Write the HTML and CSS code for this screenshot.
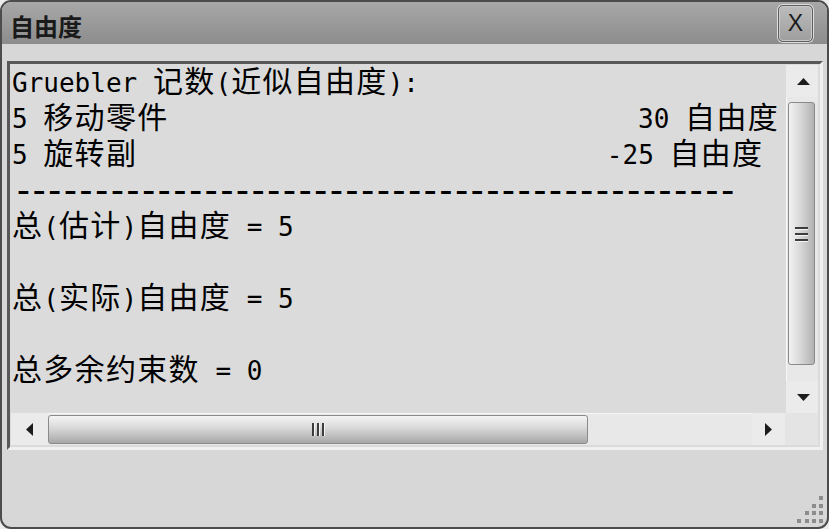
FILE: index.html
```html
<!DOCTYPE html>
<html lang="zh-CN">
<head>
<meta charset="utf-8">
<title>自由度</title>
<link rel="stylesheet" href="styles.css">
</head>
<body>
<div class="window">
  <div class="titlebar">
    <span class="title">自由度</span>
    <button class="close">X</button>
  </div>
  <div class="content">
    <div class="frame">
      <div class="view">
        <div class="text">
<div class="ln">Gruebler <span class="c">记数</span>(<span class="c">近似自由度</span>):</div>
<div class="ln">5 <span class="c">移动零件</span>                              30 <span class="c">自由度</span></div>
<div class="ln">5 <span class="c">旋转副</span>                              -25 <span class="c">自由度</span></div>
<div class="ln"><span class="dash">----------------------------------------------</span></div>
<div class="ln"><span class="c">总</span>(<span class="c">估计</span>)<span class="c">自由度</span> = 5</div>
<div class="ln"></div>
<div class="ln"><span class="c">总</span>(<span class="c">实际</span>)<span class="c">自由度</span> = 5</div>
<div class="ln"></div>
<div class="ln"><span class="c">总多余约束数</span> = 0</div>
        </div>
        <div class="vscroll">
          <div class="vbtn"><svg width="13" height="7" viewBox="0 0 13 7"><polygon points="0,7 6.5,0 13,7" fill="#1c1c1c"/></svg></div>
          <div class="vtrack">
            <div class="vthumb">
              <svg width="13" height="16" viewBox="0 0 13 16"><rect x="0" y="1" width="13" height="2" fill="#3c3c3c"/><rect x="0" y="3" width="13" height="1" fill="#f4f4f4"/><rect x="0" y="7" width="13" height="2" fill="#3c3c3c"/><rect x="0" y="9" width="13" height="1" fill="#f4f4f4"/><rect x="0" y="13" width="13" height="2" fill="#3c3c3c"/><rect x="0" y="15" width="13" height="1" fill="#f4f4f4"/></svg>
            </div>
          </div>
          <div class="vbtn"><svg width="13" height="7" viewBox="0 0 13 7"><polygon points="0,0 13,0 6.5,7" fill="#1c1c1c"/></svg></div>
        </div>
      </div>
      <div class="hrow">
        <div class="hscroll">
          <div class="hbtn hleft"><svg width="7" height="13" viewBox="0 0 7 13"><polygon points="7,0 0,6.5 7,13" fill="#1c1c1c"/></svg></div>
          <div class="hthumb">
            <svg width="14" height="13" viewBox="0 0 14 13"><rect x="1" y="0" width="2" height="13" fill="#3c3c3c"/><rect x="3" y="0" width="1" height="13" fill="#f4f4f4"/><rect x="6" y="0" width="2" height="13" fill="#3c3c3c"/><rect x="8" y="0" width="1" height="13" fill="#f4f4f4"/><rect x="11" y="0" width="2" height="13" fill="#3c3c3c"/><rect x="13" y="0" width="1" height="13" fill="#f4f4f4"/></svg>
          </div>
          <div class="htrack"></div>
          <div class="hbtn hright"><svg width="7" height="13" viewBox="0 0 7 13"><polygon points="0,0 7,6.5 0,13" fill="#1c1c1c"/></svg></div>
        </div>
        <div class="corner"></div>
      </div>
    </div>
  </div>
  <svg class="grip" width="32" height="32" viewBox="0 0 32 32">
    <g fill="#8c8c8c">
      <rect x="25" y="2" width="4" height="4"/>
      <rect x="18" y="10" width="4" height="4"/><rect x="25" y="10" width="4" height="4"/>
      <rect x="11" y="17" width="4" height="4"/><rect x="18" y="17" width="4" height="4"/><rect x="25" y="17" width="4" height="4"/>
      <rect x="3" y="25" width="4" height="4"/><rect x="11" y="25" width="4" height="4"/><rect x="18" y="25" width="4" height="4"/><rect x="25" y="25" width="4" height="4"/>
    </g>
  </svg>
</div>
</body>
</html>
```
FILE: styles.css
```css
html, body {
  margin: 0;
  padding: 0;
  background: #ececec;
}

.window {
  position: relative;
  width: 829px;
  height: 529px;
  box-sizing: border-box;
  border: 2px solid #4c4c4c;
  border-radius: 11px;
  background: #d7d7d7;
  overflow: hidden;
  display: flex;
  flex-direction: column;
}

.titlebar {
  height: 42px;
  flex: none;
  display: flex;
  align-items: center;
  justify-content: space-between;
  padding: 0 14px 0 8px;
  background: linear-gradient(#a8a8a8, #8c8c8c);
}

.title {
  font-family: "Noto Sans CJK SC", sans-serif;
  font-weight: 700;
  font-size: 24px;
  line-height: 24px;
  color: #1a1a1a;
  margin-top: 6px;
}

.close {
  width: 35px;
  height: 37px;
  box-sizing: border-box;
  margin-top: 1px;
  padding: 0;
  border: 1px solid #5e5e5e;
  border-radius: 5px;
  background: linear-gradient(#bcbcbc, #9e9e9e);
  box-shadow: 0 0 0 1px #dedede, inset 0 0 0 1px #cacaca;
  font-family: "Liberation Sans", sans-serif;
  font-size: 23px;
  line-height: 1;
  color: #1a1a1a;
  display: flex;
  align-items: center;
  justify-content: center;
}

.content {
  flex: 1;
  padding: 17px 4px 0 5px;
}

.frame {
  height: 389px;
  box-sizing: border-box;
  border: 3px solid;
  border-color: #585858 #f0f0f0 #f0f0f0 #585858;
  padding: 1px 2px 2px 1px;
  display: flex;
  flex-direction: column;
  background: #dbdbdb;
}

.view {
  display: flex;
  height: 348px;
}

.text {
  flex: 1;
  overflow: hidden;
  padding-left: 1px;
  background: #dbdbdb;
  font-family: "DejaVu Sans Mono", monospace;
  font-size: 26px;
  color: #000;
}

.ln {
  height: 28px;
  line-height: 28px;
  padding-bottom: 8px;
  white-space: pre;
}

.c {
  display: inline-block;
  line-height: 28px;
  font-family: "Noto Sans CJK SC", sans-serif;
  font-size: 30px;
  letter-spacing: 1.3px;
}

.dash {
  display: inline-block;
  line-height: 28px;
  font-size: 38px;
  letter-spacing: -7.23px;
  position: relative;
  top: 3px;
}

.vscroll {
  width: 32px;
  display: flex;
  flex-direction: column;
  background: #e8e8e8;
  box-shadow: inset 1px 0 0 #f6f6f6;
}

.vbtn {
  height: 32px;
  flex: none;
  display: flex;
  align-items: center;
  justify-content: center;
  padding-left: 2px;
  background: #ebebeb;
}

.vtrack {
  flex: 1;
  padding: 5px 3px 0 2px;
}

.vthumb {
  height: 263px;
  box-sizing: border-box;
  border: 1px solid #8a8a8a;
  border-radius: 3px;
  background: linear-gradient(90deg, #f2f2f2, #d8d8d8 45%, #b2b2b2);
  display: flex;
  align-items: center;
  justify-content: center;
}

.hrow {
  display: flex;
  height: 32px;
}

.hscroll {
  flex: 1;
  display: flex;
  align-items: center;
  background: #e8e8e8;
  box-shadow: inset 0 1px 0 #f6f6f6;
}

.hbtn {
  height: 32px;
  display: flex;
  align-items: center;
  justify-content: center;
  background: #ebebeb;
}

.hleft {
  width: 37px;
}

.hright {
  width: 33px;
}

.hthumb {
  width: 540px;
  height: 29px;
  box-sizing: border-box;
  border: 1px solid #8a8a8a;
  border-radius: 3px;
  background: linear-gradient(#f4f4f4, #dcdcdc 40%, #a8a8a8);
  display: flex;
  align-items: center;
  justify-content: center;
}

.htrack {
  flex: 1;
}

.corner {
  width: 33px;
  background: #e4e4e4;
}

.grip {
  position: absolute;
  right: 1px;
  bottom: 1px;
}
```
